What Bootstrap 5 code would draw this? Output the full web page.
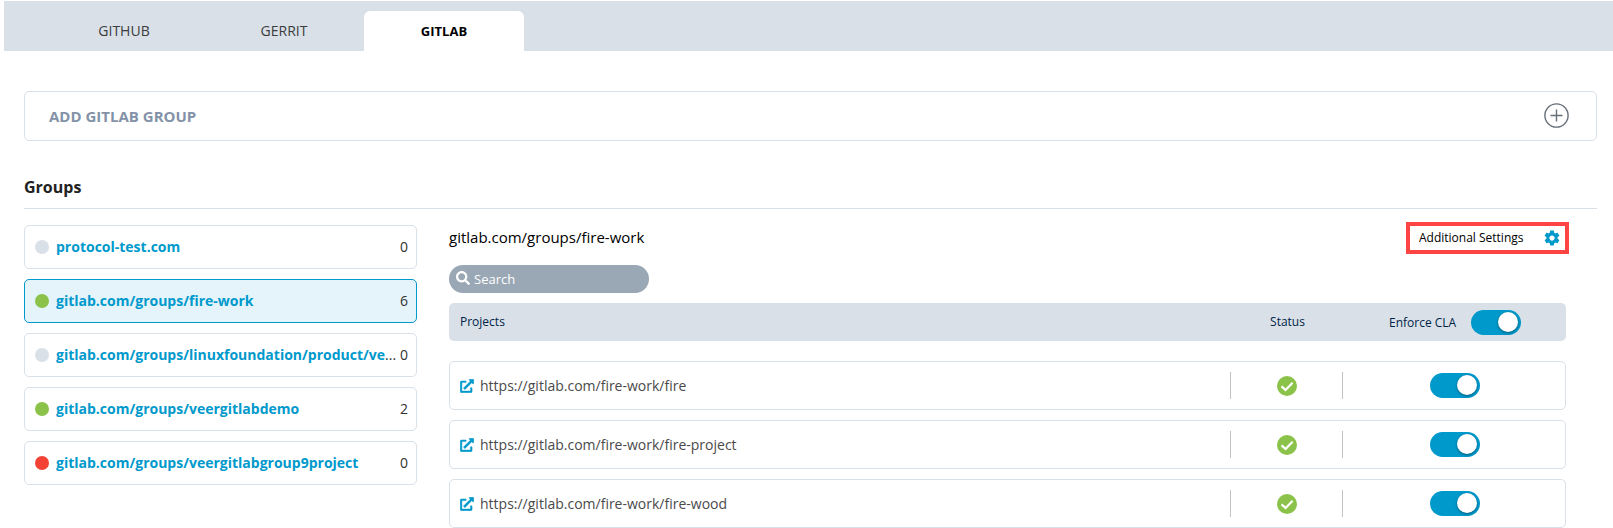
<!DOCTYPE html>
<html lang="en">
<head>
<meta charset="utf-8">
<meta name="viewport" content="width=device-width, initial-scale=1">
<title>GitLab groups</title>
<link href="https://cdn.jsdelivr.net/npm/bootstrap@5.3.0/dist/css/bootstrap.min.css" rel="stylesheet">
<style>
  :root { --line: #d9e0e8; --brand: #0099cc; }
  body { font-family: "Open Sans", "Noto Sans", sans-serif; font-size: 14px; line-height: 20px; color: #333; background: #fff; overflow: hidden; }
  .tabbar { background: var(--line); height: 50px; margin: 0 0 0 4px; padding-left: 40px; }
  .tabbar .nav-link { width: 160px; height: 40px; padding: 0; line-height: 40px; text-align: center; font-size: 14px; color: #3c3c3c; border-radius: 6px 6px 0 0; }
  .tabbar .nav-link.active { background: #fff; color: #000; font-weight: 700; font-size: 13px; }
  .page-body { padding: 40px 16px 0 24px; }
  .box { border: 1px solid var(--line); border-radius: 5px; }
  .add-group { height: 50px; padding: 0 27px 1px 24px; color: #8392a7; font-weight: 700; font-size: 15px; }
  .section-title { font-size: 16px; font-weight: 700; color: #222; line-height: 22px; margin: 35px 0 0; padding-bottom: 10px; border-bottom: 1px solid var(--line); }
  .group-list { width: 393px; gap: 10px; }
  .group-item { height: 44px; padding: 0 8px 0 10px; }
  .group-item.selected { border-color: var(--brand); background: #e5f4fa; }
  .group-item a { color: var(--brand); font-weight: 700; text-decoration: none; }
  .group-name { margin: 0 4px 0 7px; }
  .dot { width: 14px; height: 14px; background: var(--line); }
  .dot.ok { background: #8bc34a; }
  .dot.bad { background: #f44336; }
  .detail { width: 1117px; margin-left: 32px; }
  .detail-top { height: 29px; }
  .detail-title { font-size: 15px; color: #000; line-height: 24px; }
  .settings { width: 163px; height: 32px; border: 4px solid #ff4444; margin: -3px -3px 0 0; padding: 0 4px 0 9px; color: #000; font-size: 12px; }
  .settings span { padding-bottom: 1px; }
  .search-pill { width: 200px; height: 28px; background: #9aa7b5; color: #fff; font-size: 13px; font-weight: 500; padding-left: 7px; margin-top: 11px; }
  .search-pill svg { margin-bottom: 2px; }
  .table-head { height: 38px; background: var(--line); border-radius: 5px; margin: 10px 0 20px; color: #002447; font-size: 12px; padding: 0 1px; }
  .project { height: 49px; margin-bottom: 10px; color: #4a4a4a; }
  .project:last-child { margin-bottom: 0; }
  .col-name { padding-left: 10px; }
  .proj-link { margin-left: 6px; }
  .col-status { width: 113px; }
  .table-head .col-status { padding-left: 2px; }
  .project .col-status { height: 27px; border: solid #bfc3c8; border-width: 0 1px; }
  .col-cla { width: 222px; }
  .switch { width: 50px; height: 25px; border-radius: 13px; background: var(--brand); padding: 2px 3px; }
  .knob { width: 20px; height: 20px; background: #fff; box-shadow: 0 1px 3px rgba(0,0,0,.4); }
  .col-cla .switch { margin-left: 87px; }
  .table-head .switch { margin-left: 15px; }
  .cla-label { margin-left: 46px; padding-top: 1px; }
  svg { display: block; flex: none; }
</style>
</head>
<body class="border-top border-white">
<svg width="0" height="0" class="position-absolute">
  <symbol id="ext" viewBox="-8 -8 528 528"><path fill="#0099cc" stroke="#0099cc" stroke-width="16" d="M432,320H400a16,16,0,0,0-16,16V448H64V128H208a16,16,0,0,0,16-16V80a16,16,0,0,0-16-16H48A48,48,0,0,0,0,112V464a48,48,0,0,0,48,48H400a48,48,0,0,0,48-48V336A16,16,0,0,0,432,320ZM488,0h-128c-21.37,0-32.05,25.91-17,41l35.73,35.73L135,320.37a24,24,0,0,0,0,34L157.67,377a24,24,0,0,0,34,0L435.28,133.32,471,169c15,15,41,4.5,41-17V24A24,24,0,0,0,488,0Z"/></symbol>
  <symbol id="check" viewBox="0 0 20 20"><circle cx="10" cy="10" r="10" fill="#8bc34a"/><path d="M4.5 10.300l4.100 3.600 7-7.100" fill="none" stroke="#fff" stroke-width="2.200"/></symbol>
</svg>

<nav class="nav tabbar align-items-end">
  <a class="nav-link" href="#">GITHUB</a>
  <a class="nav-link" href="#">GERRIT</a>
  <a class="nav-link active" href="#">GITLAB</a>
</nav>

<main class="page-body">
  <div class="box add-group d-flex align-items-center justify-content-between">
    <span>ADD GITLAB GROUP</span>
    <svg width="25" height="25" viewBox="0 0 25 25" fill="none" stroke="#666e78" stroke-width="1.4"><circle cx="12.5" cy="12.5" r="11.6"/><path d="M12.5 6.5v12M6.5 12.5h12"/></svg>
  </div>

  <h2 class="section-title">Groups</h2>

  <div class="d-flex align-items-start">
    <div class="group-list d-flex flex-column flex-shrink-0 mt-3">
      <div class="box group-item d-flex align-items-center"><span class="dot rounded-circle flex-shrink-0"></span><span class="group-name text-truncate flex-grow-1"><a href="#">protocol-test.com</a></span><span>0</span></div>
      <div class="box group-item selected d-flex align-items-center"><span class="dot ok rounded-circle flex-shrink-0"></span><span class="group-name text-truncate flex-grow-1"><a href="#">gitlab.com/groups/fire-work</a></span><span>6</span></div>
      <div class="box group-item d-flex align-items-center"><span class="dot rounded-circle flex-shrink-0"></span><span class="group-name flex-grow-1 text-nowrap"><a href="#">gitlab.com/groups/linuxfoundation/product/ve</a>...</span><span>0</span></div>
      <div class="box group-item d-flex align-items-center"><span class="dot ok rounded-circle flex-shrink-0"></span><span class="group-name text-truncate flex-grow-1"><a href="#">gitlab.com/groups/veergitlabdemo</a></span><span>2</span></div>
      <div class="box group-item d-flex align-items-center"><span class="dot bad rounded-circle flex-shrink-0"></span><span class="group-name text-truncate flex-grow-1"><a href="#">gitlab.com/groups/veergitlabgroup9project</a></span><span>0</span></div>
    </div>

    <section class="detail flex-shrink-0 mt-3">
      <div class="detail-top d-flex justify-content-between align-items-start">
        <span class="detail-title">gitlab.com/groups/fire-work</span>
        <div class="settings d-flex align-items-center justify-content-between">
          <span>Additional Settings</span>
          <svg width="18" height="18" viewBox="0 0 24 24" fill="#0099cc"><path d="M19.43 12.98c.04-.32.07-.64.07-.98s-.03-.66-.07-.98l2.11-1.65c.19-.15.24-.42.12-.64l-2-3.46c-.12-.22-.39-.3-.61-.22l-2.49 1c-.52-.4-1.08-.73-1.69-.98l-.38-2.65C14.46 2.18 14.25 2 14 2h-4c-.25 0-.46.18-.49.42l-.38 2.65c-.61.25-1.17.59-1.69.98l-2.49-1c-.23-.09-.49 0-.61.22l-2 3.46c-.13.22-.07.49.12.64l2.11 1.65c-.04.32-.07.65-.07.98s.03.66.07.98l-2.11 1.65c-.19.15-.24.42-.12.64l2 3.46c.12.22.39.3.61.22l2.49-1c.52.4 1.08.73 1.69.98l.38 2.65c.03.24.24.42.49.42h4c.25 0 .46-.18.49-.42l.38-2.65c.61-.25 1.17-.59 1.69-.98l2.49 1c.23.09.49 0 .61-.22l2-3.46c.12-.22.07-.49-.12-.64l-2.11-1.65zM12 15.5c-1.93 0-3.5-1.57-3.5-3.5s1.57-3.5 3.5-3.5 3.5 1.57 3.5 3.5-1.57 3.5-3.5 3.5z"/></svg>
        </div>
      </div>

      <div class="search-pill rounded-pill d-flex align-items-center">
        <svg width="14" height="14" viewBox="0 0 512 512" fill="#fff"><path d="M505 442.700L405.300 343c-4.500-4.500-10.600-7-17-7H372c27.600-35.300 44-79.700 44-128C416 93.100 322.900 0 208 0S0 93.100 0 208s93.100 208 208 208c48.300 0 92.700-16.400 128-44v16.300c0 6.400 2.500 12.500 7 17l99.700 99.700c9.400 9.400 24.600 9.400 33.900 0l28.300-28.300c9.400-9.400 9.400-24.600.1-34zM208 336c-70.700 0-128-57.200-128-128 0-70.700 57.200-128 128-128 70.700 0 128 57.200 128 128 0 70.700-57.200 128-128 128z"/></svg>
        <span class="ms-1">Search</span>
      </div>

      <div class="table-head d-flex align-items-center">
        <div class="col-name flex-grow-1">Projects</div>
        <div class="col-status text-center">Status</div>
        <div class="col-cla d-flex align-items-center"><span class="cla-label">Enforce CLA</span><div class="switch d-flex justify-content-end"><span class="knob rounded-circle"></span></div></div>
      </div>

      <div class="box project d-flex align-items-center">
        <div class="col-name flex-grow-1 d-flex align-items-center"><svg width="14" height="14"><use href="#ext"/></svg><span class="proj-link">https://gitlab.com/fire-work/fire</span></div>
        <div class="col-status d-flex align-items-center justify-content-center"><svg width="20" height="20"><use href="#check"/></svg></div>
        <div class="col-cla"><div class="switch d-flex justify-content-end"><span class="knob rounded-circle"></span></div></div>
      </div>
      <div class="box project d-flex align-items-center">
        <div class="col-name flex-grow-1 d-flex align-items-center"><svg width="14" height="14"><use href="#ext"/></svg><span class="proj-link">https://gitlab.com/fire-work/fire-project</span></div>
        <div class="col-status d-flex align-items-center justify-content-center"><svg width="20" height="20"><use href="#check"/></svg></div>
        <div class="col-cla"><div class="switch d-flex justify-content-end"><span class="knob rounded-circle"></span></div></div>
      </div>
      <div class="box project d-flex align-items-center">
        <div class="col-name flex-grow-1 d-flex align-items-center"><svg width="14" height="14"><use href="#ext"/></svg><span class="proj-link">https://gitlab.com/fire-work/fire-wood</span></div>
        <div class="col-status d-flex align-items-center justify-content-center"><svg width="20" height="20"><use href="#check"/></svg></div>
        <div class="col-cla"><div class="switch d-flex justify-content-end"><span class="knob rounded-circle"></span></div></div>
      </div>
    </section>
  </div>
</main>
<script src="https://cdn.jsdelivr.net/npm/bootstrap@5.3.0/dist/js/bootstrap.bundle.min.js"></script>
</body>
</html>
